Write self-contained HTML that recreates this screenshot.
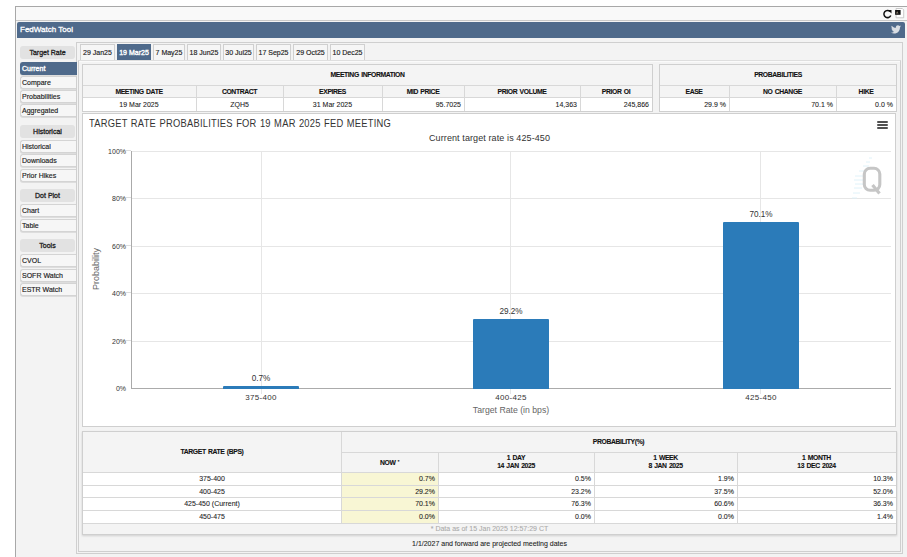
<!DOCTYPE html>
<html><head><meta charset="utf-8">
<style>
*{box-sizing:border-box;margin:0;padding:0}
html,body{width:907px;height:557px;overflow:hidden;background:#fff;font-family:"Liberation Sans",sans-serif;color:#222}
.a{position:absolute}
.t{position:absolute;white-space:nowrap}
#frame{left:15px;top:6px;width:900px;height:560px;border:1px solid #a8a8a8;background:#f3f3f3}
#toolbar{left:16px;top:7px;width:891px;height:14px;background:#f9f9f9;border-bottom:1px solid #c8c8c8}
#hdr{left:17px;top:22px;width:888px;height:16px;background:#4f6a8b;border-radius:2px 2px 0 0;color:#fff;font-size:8px;line-height:15px;padding-left:3px;-webkit-text-stroke:0.3px #fff}
.sb{left:20px;width:57px;height:13px;background:#f6f6f6;border:1px solid #d4d4d4;border-right:none;border-radius:3px 0 0 3px;box-shadow:0 1px 0 #ddd;font-size:7px;line-height:12px;padding-left:1px;color:#222;-webkit-text-stroke:0.15px #222}
.sh{left:20px;width:55px;height:13px;background:#e2e2e2;border-radius:3px;font-size:7px;text-align:center;line-height:13px;color:#222;-webkit-text-stroke:0.3px #222}
.sel{background:#4f6a8b !important;color:#fff !important;border-color:#4f6a8b !important;-webkit-text-stroke:0.35px #fff}
.sb.sel{width:57px;z-index:2}
.tab.sel{-webkit-text-stroke:0.35px #fff}
.tab{top:44px;height:16px;background:#f6f6f6;border:1px solid #d0d0d0;border-bottom:none;font-size:7px;line-height:16px;text-align:center;color:#222;-webkit-text-stroke:0.15px #222}
.c{font-size:7px;line-height:9px;-webkit-text-stroke:0.08px currentColor}
.h{font-size:6.8px;letter-spacing:-0.37px;word-spacing:0.8px;font-weight:bold;line-height:8px;color:#111;-webkit-text-stroke:0.1px #111}
.hl{position:absolute;background:#d8d8d8;height:1px}
.vl{position:absolute;background:#d8d8d8;width:1px}
.box{position:absolute;border:1px solid #cfcfcf}
.ct{position:absolute;white-space:nowrap;color:#333}
.grid{position:absolute;left:131px;width:760px;height:1px;background:#e6e6e6}
.vg{position:absolute;top:151px;height:243px;width:1px;background:#e6e6e6}
.bar{position:absolute;background:#2b7bb9;border-radius:1px 1px 0 0}
</style></head><body>
<div id="frame" class="a"></div><div id="toolbar" class="a"></div><div id="hdr" class="a">FedWatch Tool</div>
<svg class="a" style="left:882px;top:9px" width="11" height="11" viewBox="0 0 11 11"><path d="M8.1 2.5A3.6 3.6 0 1 0 8.8 6.5" fill="none" stroke="#111" stroke-width="1.5"/><path d="M5.9 1.1L9.5 1.1 9.5 4.4z" fill="#111"/></svg>
<svg class="a" style="left:894px;top:8px" width="11" height="11" viewBox="0 0 11 11"><path d="M2.1 0.5H8.3L9.7 1.9V9.8H2.1z" fill="#fff" stroke="#b5b5b5" stroke-width="0.7"/><rect x="1.1" y="2" width="5.5" height="4.8" fill="#111"/><path d="M2 5.6L3.2 3.2 4.6 5.6z" fill="#8a8070"/></svg>
<svg class="a" style="left:891px;top:25px" width="10" height="9" viewBox="0 0 24 20"><path d="M24 2.4c-.9.4-1.8.6-2.8.8 1-.6 1.8-1.6 2.2-2.7-1 .6-2 1-3.1 1.2C19.3.7 18 0 16.6 0c-2.7 0-4.9 2.2-4.9 4.9 0 .4 0 .8.1 1.1C7.7 5.8 4.1 3.9 1.7.9c-.4.7-.7 1.6-.7 2.5 0 1.7.9 3.2 2.2 4.1-.8 0-1.6-.2-2.2-.6v.1c0 2.4 1.7 4.4 3.9 4.8-.4.1-.8.2-1.3.2-.3 0-.6 0-.9-.1.6 2 2.4 3.4 4.6 3.4-1.7 1.3-3.8 2.1-6.1 2.1-.4 0-.8 0-1.2-.1 2.2 1.4 4.8 2.2 7.5 2.2 9.1 0 14-7.5 14-14v-.6c1-.7 1.8-1.6 2.5-2.5z" fill="#d8dde3"/></svg>
<div class="a sh" style="top:46px">Target Rate</div>
<div class="a sb sel" style="top:62px">Current</div>
<div class="a sb" style="top:76px">Compare</div>
<div class="a sb" style="top:90px">Probabilities</div>
<div class="a sb" style="top:104px">Aggregated</div>
<div class="a sh" style="top:125px">Historical</div>
<div class="a sb" style="top:140px">Historical</div>
<div class="a sb" style="top:154px">Downloads</div>
<div class="a sb" style="top:169px">Prior Hikes</div>
<div class="a sh" style="top:189px">Dot Plot</div>
<div class="a sb" style="top:204px">Chart</div>
<div class="a sb" style="top:219px">Table</div>
<div class="a sh" style="top:239px">Tools</div>
<div class="a sb" style="top:254px">CVOL</div>
<div class="a sb" style="top:269px">SOFR Watch</div>
<div class="a sb" style="top:283px">ESTR Watch</div>
<div class="box" style="left:76px;top:42px;width:827px;height:512px;background:#f3f3f3"></div>
<div class="box" style="left:78px;top:60px;width:823px;height:492px;background:#f3f3f3;border-top-color:#dedede;box-shadow:inset 0 1px 0 #fafafa"></div>
<div class="a tab" style="left:80px;width:35px">29 Jan25</div>
<div class="a tab sel" style="left:117px;width:34px">19 Mar25</div>
<div class="a tab" style="left:153px;width:32px">7 May25</div>
<div class="a tab" style="left:187px;width:34px">18 Jun25</div>
<div class="a tab" style="left:223px;width:31px">30 Jul25</div>
<div class="a tab" style="left:256px;width:35px">17 Sep25</div>
<div class="a tab" style="left:293px;width:35px">29 Oct25</div>
<div class="a tab" style="left:330px;width:35px">10 Dec25</div>
<div class="box" style="left:82px;top:64px;width:571px;height:48px;background:#f4f4f4"></div>
<div class="a" style="left:83px;top:98px;width:569px;height:13px;background:#fff"></div>
<div class="hl" style="left:83px;top:85px;width:569px"></div>
<div class="hl" style="left:83px;top:97px;width:569px"></div>
<div class="vl" style="left:196px;top:86px;height:25px"></div>
<div class="vl" style="left:283px;top:86px;height:25px"></div>
<div class="vl" style="left:382px;top:86px;height:25px"></div>
<div class="vl" style="left:464px;top:86px;height:25px"></div>
<div class="vl" style="left:580px;top:86px;height:25px"></div>
<div class="t h" style="left:82px;width:571px;top:71px;text-align:center;">MEETING INFORMATION</div>
<div class="t h" style="left:82px;width:114px;top:88px;text-align:center;">MEETING DATE</div>
<div class="t c" style="left:82px;width:114px;top:100px;text-align:center;">19 Mar 2025</div>
<div class="t h" style="left:196px;width:87px;top:88px;text-align:center;">CONTRACT</div>
<div class="t c" style="left:196px;width:87px;top:100px;text-align:center;">ZQH5</div>
<div class="t h" style="left:283px;width:99px;top:88px;text-align:center;">EXPIRES</div>
<div class="t c" style="left:283px;width:99px;top:100px;text-align:center;">31 Mar 2025</div>
<div class="t h" style="left:382px;width:82px;top:88px;text-align:center;">MID PRICE</div>
<div class="t c" style="left:382px;width:79px;top:100px;text-align:right;">95.7025</div>
<div class="t h" style="left:464px;width:116px;top:88px;text-align:center;">PRIOR VOLUME</div>
<div class="t c" style="left:464px;width:113px;top:100px;text-align:right;">14,363</div>
<div class="t h" style="left:580px;width:72px;top:88px;text-align:center;">PRIOR OI</div>
<div class="t c" style="left:580px;width:69px;top:100px;text-align:right;">245,866</div>
<div class="box" style="left:659px;top:64px;width:238px;height:48px;background:#f4f4f4"></div>
<div class="a" style="left:660px;top:98px;width:236px;height:13px;background:#fff"></div>
<div class="hl" style="left:660px;top:85px;width:236px"></div>
<div class="hl" style="left:660px;top:97px;width:236px"></div>
<div class="vl" style="left:729px;top:86px;height:25px"></div>
<div class="vl" style="left:836px;top:86px;height:25px"></div>
<div class="t h" style="left:659px;width:238px;top:71px;text-align:center;">PROBABILITIES</div>
<div class="t h" style="left:659px;width:70px;top:88px;text-align:center;">EASE</div>
<div class="t c" style="left:659px;width:67px;top:100px;text-align:right;">29.9 %</div>
<div class="t h" style="left:729px;width:107px;top:88px;text-align:center;">NO CHANGE</div>
<div class="t c" style="left:729px;width:104px;top:100px;text-align:right;">70.1 %</div>
<div class="t h" style="left:836px;width:60px;top:88px;text-align:center;">HIKE</div>
<div class="t c" style="left:836px;width:57px;top:100px;text-align:right;">0.0 %</div>
<div class="box" style="left:82px;top:113px;width:814px;height:314px;background:#fff"></div>
<div class="ct" style="left:89px;top:117px;font-size:10.8px;letter-spacing:0.3px;word-spacing:0.5px;transform:scaleX(0.865);transform-origin:0 0;color:#333">TARGET RATE PROBABILITIES FOR 19 MAR 2025 FED MEETING</div>
<div class="ct" style="left:429px;top:133px;font-size:9px;letter-spacing:0.1px;color:#333">Current target rate is 425-450</div>
<div class="grid" style="top:151px"></div>
<div class="a" style="left:126px;top:150px;width:5px;height:1px;background:#ddd"></div>
<div class="t" style="left:90px;width:36px;text-align:right;top:147px;font-size:7px;line-height:9px;color:#333">100%</div>
<div class="grid" style="top:198px"></div>
<div class="a" style="left:126px;top:197px;width:5px;height:1px;background:#ddd"></div>
<div class="t" style="left:90px;width:36px;text-align:right;top:194px;font-size:7px;line-height:9px;color:#333">80%</div>
<div class="grid" style="top:246px"></div>
<div class="a" style="left:126px;top:245px;width:5px;height:1px;background:#ddd"></div>
<div class="t" style="left:90px;width:36px;text-align:right;top:242px;font-size:7px;line-height:9px;color:#333">60%</div>
<div class="grid" style="top:293px"></div>
<div class="a" style="left:126px;top:292px;width:5px;height:1px;background:#ddd"></div>
<div class="t" style="left:90px;width:36px;text-align:right;top:289px;font-size:7px;line-height:9px;color:#333">40%</div>
<div class="grid" style="top:341px"></div>
<div class="a" style="left:126px;top:340px;width:5px;height:1px;background:#ddd"></div>
<div class="t" style="left:90px;width:36px;text-align:right;top:337px;font-size:7px;line-height:9px;color:#333">20%</div>
<div class="t" style="left:90px;width:36px;text-align:right;top:384px;font-size:7px;line-height:9px;color:#333">0%</div>
<div class="vg" style="left:261px"></div>
<div class="vg" style="left:510px"></div>
<div class="vg" style="left:760px"></div>
<div class="a" style="left:131px;top:151px;width:1px;height:237px;background:#aaa"></div>
<div class="a" style="left:131px;top:388px;width:760px;height:1px;background:#ababab"></div>
<div class="t" style="left:96px;top:269px;font-size:9px;line-height:10px;color:#666;transform:translate(-50%,-50%) rotate(-90deg)">Probability</div>
<div class="bar" style="left:223px;width:76px;top:386.3px;height:2.7px"></div>
<div class="t" style="left:221px;width:80px;text-align:center;top:374px;font-size:8.2px;line-height:10px;color:#333">0.7%</div>
<div class="t" style="left:221px;width:80px;text-align:center;top:393px;font-size:8px;letter-spacing:0.3px;line-height:10px;color:#333">375-400</div>
<div class="bar" style="left:473px;width:76px;top:318.8px;height:70.2px"></div>
<div class="t" style="left:471px;width:80px;text-align:center;top:307px;font-size:8.2px;line-height:10px;color:#333">29.2%</div>
<div class="t" style="left:471px;width:80px;text-align:center;top:393px;font-size:8px;letter-spacing:0.3px;line-height:10px;color:#333">400-425</div>
<div class="bar" style="left:723px;width:76px;top:221.9px;height:167.1px"></div>
<div class="t" style="left:721px;width:80px;text-align:center;top:210px;font-size:8.2px;line-height:10px;color:#333">70.1%</div>
<div class="t" style="left:721px;width:80px;text-align:center;top:393px;font-size:8px;letter-spacing:0.3px;line-height:10px;color:#333">425-450</div>
<div class="t" style="left:431px;width:160px;text-align:center;top:405px;font-size:8.7px;line-height:10px;color:#666">Target Rate (in bps)</div>
<div class="a" style="left:877px;top:121px;width:11px;height:2px;border-radius:1px;background:#505050"></div>
<div class="a" style="left:877px;top:124px;width:11px;height:2px;border-radius:1px;background:#505050"></div>
<div class="a" style="left:877px;top:127px;width:11px;height:2px;border-radius:1px;background:#505050"></div>
<svg class="a" style="left:845px;top:150px" width="45" height="55" viewBox="0 0 45 55"><line x1="24" y1="8" x2="27" y2="8" stroke="#dcf0f8" stroke-width="0.9"/><line x1="21" y1="12" x2="25" y2="12" stroke="#dcf0f8" stroke-width="0.9"/><line x1="18" y1="16" x2="24" y2="16" stroke="#dcf0f8" stroke-width="0.9"/><line x1="14" y1="21" x2="22" y2="21" stroke="#dcf0f8" stroke-width="0.9"/><line x1="10" y1="26" x2="20" y2="26" stroke="#dcf0f8" stroke-width="0.9"/><line x1="9" y1="30" x2="19" y2="30" stroke="#dcf0f8" stroke-width="0.9"/><line x1="10" y1="34" x2="18" y2="34" stroke="#dcf0f8" stroke-width="0.9"/><line x1="9" y1="38" x2="17" y2="38" stroke="#dcf0f8" stroke-width="0.9"/><line x1="8" y1="43" x2="15" y2="43" stroke="#dcf0f8" stroke-width="0.9"/><line x1="7" y1="48" x2="12" y2="48" stroke="#dcf0f8" stroke-width="0.9"/><rect x="19.3" y="18.3" width="15.5" height="22" rx="5.8" fill="none" stroke="#c6c6c6" stroke-width="3.1"/><path d="M27.5 35 L34.5 43.5" stroke="#c6c6c6" stroke-width="3.2"/></svg>
<div class="box" style="left:82px;top:431px;width:815px;height:104px;background:#f4f4f4;box-shadow:0 1px 2px rgba(0,0,0,0.15)"></div>
<div class="a" style="left:83px;top:473px;width:813px;height:50px;background:#fff"></div>
<div class="a" style="left:342px;top:473px;width:96px;height:50px;background:#f8f6d4"></div>
<div class="hl" style="left:342px;top:452px;width:554px"></div>
<div class="hl" style="left:83px;top:472px;width:813px"></div>
<div class="hl" style="left:83px;top:485px;width:813px"></div>
<div class="hl" style="left:83px;top:497px;width:813px"></div>
<div class="hl" style="left:83px;top:510px;width:813px"></div>
<div class="hl" style="left:83px;top:523px;width:813px"></div>
<div class="vl" style="left:341px;top:432px;height:91px"></div>
<div class="vl" style="left:438px;top:453px;height:70px"></div>
<div class="vl" style="left:594px;top:453px;height:70px"></div>
<div class="vl" style="left:737px;top:453px;height:70px"></div>
<div class="t h" style="left:83px;width:258px;top:448px;text-align:center;">TARGET RATE (BPS)</div>
<div class="t h" style="left:341px;width:555px;top:438px;text-align:center;">PROBABILITY(%)</div>
<div class="t h" style="left:341px;width:97px;top:459px;text-align:center;">NOW <span style="position:relative;top:-2px;font-size:4px">*</span></div>
<div class="t h" style="left:438px;width:156px;top:454px;text-align:center;line-height:8px">1 DAY<br>14 JAN 2025</div>
<div class="t h" style="left:594px;width:143px;top:454px;text-align:center;line-height:8px">1 WEEK<br>8 JAN 2025</div>
<div class="t h" style="left:737px;width:159px;top:454px;text-align:center;line-height:8px">1 MONTH<br>13 DEC 2024</div>
<div class="t c" style="left:83px;width:258px;top:474px;text-align:center;">375-400</div>
<div class="t c" style="left:341px;width:94px;top:474px;text-align:right;">0.7%</div>
<div class="t c" style="left:438px;width:153px;top:474px;text-align:right;">0.5%</div>
<div class="t c" style="left:594px;width:140px;top:474px;text-align:right;">1.9%</div>
<div class="t c" style="left:737px;width:156px;top:474px;text-align:right;">10.3%</div>
<div class="t c" style="left:83px;width:258px;top:487px;text-align:center;">400-425</div>
<div class="t c" style="left:341px;width:94px;top:487px;text-align:right;">29.2%</div>
<div class="t c" style="left:438px;width:153px;top:487px;text-align:right;">23.2%</div>
<div class="t c" style="left:594px;width:140px;top:487px;text-align:right;">37.5%</div>
<div class="t c" style="left:737px;width:156px;top:487px;text-align:right;">52.0%</div>
<div class="t c" style="left:83px;width:258px;top:499px;text-align:center;">425-450 (Current)</div>
<div class="t c" style="left:341px;width:94px;top:499px;text-align:right;">70.1%</div>
<div class="t c" style="left:438px;width:153px;top:499px;text-align:right;">76.3%</div>
<div class="t c" style="left:594px;width:140px;top:499px;text-align:right;">60.6%</div>
<div class="t c" style="left:737px;width:156px;top:499px;text-align:right;">36.3%</div>
<div class="t c" style="left:83px;width:258px;top:512px;text-align:center;">450-475</div>
<div class="t c" style="left:341px;width:94px;top:512px;text-align:right;">0.0%</div>
<div class="t c" style="left:438px;width:153px;top:512px;text-align:right;">0.0%</div>
<div class="t c" style="left:594px;width:140px;top:512px;text-align:right;">0.0%</div>
<div class="t c" style="left:737px;width:156px;top:512px;text-align:right;">1.4%</div>
<div class="t c" style="left:83px;width:813px;top:524px;text-align:center;color:#aaa">* Data as of 15 Jan 2025 12:57:29 CT</div>
<div class="t c" style="left:76px;width:827px;top:539px;text-align:center;">1/1/2027 and forward are projected meeting dates</div>
</body></html>
